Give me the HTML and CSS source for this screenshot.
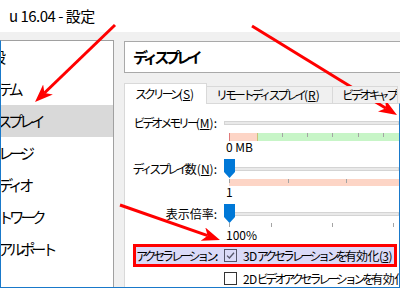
FILE: index.html
```html
<!DOCTYPE html>
<html lang="ja">
<head>
<meta charset="utf-8">
<title>設定</title>
<link rel="stylesheet" href="styles.css">
</head>
<body>
<div class="titlebar">u 16.04 - 設定</div>
<div class="main">
  <ul class="sidebar">
    <li class="item">一般</li>
    <li class="item"><span class="k">システム</span></li>
    <li class="item sel"><span class="k">ディスプレイ</span></li>
    <li class="item"><span class="k">ストレージ</span></li>
    <li class="item"><span class="k">オーディオ</span></li>
    <li class="item"><span class="k">ネットワーク</span></li>
    <li class="item"><span class="k">シリアルポート</span></li>
  </ul>
  <div class="content">
    <div class="header"><span class="k">ディスプレイ</span></div>
    <div class="tabs">
      <div class="tab sel"><span class="k">スクリーン</span>(<u>S</u>)</div>
      <div class="tab t2"><span class="k">リモートディスプレイ</span>(<u>R</u>)</div>
      <div class="tab t3"><span class="k">ビデオキャプチャー</span>(<u>C</u>)</div>
    </div>
    <div class="panel">
      <div class="block">
        <div class="lbl"><span class="k">ビデオメモリー</span>(<u>M</u>):</div>
        <div class="ctl">
          <div class="slider"><div class="track"></div></div>
          <div class="scale mem"></div>
          <div class="val">0 MB</div>
        </div>
      </div>
      <div class="block b2">
        <div class="lbl"><span class="k">ディスプレイ</span>数(<u>N</u>):</div>
        <div class="ctl">
          <div class="slider"><div class="track"></div><svg class="thumb" width="11" height="19" viewBox="0 0 11 19"><polygon points="0,0 11,0 11,13 5.5,19 0,13" fill="#0078d7"/></svg></div>
          <div class="scale mon"></div>
          <div class="val">1</div>
        </div>
      </div>
      <div class="block b3">
        <div class="lbl">表示倍率:</div>
        <div class="ctl">
          <div class="slider"><div class="track"></div><svg class="thumb" width="11" height="19" viewBox="0 0 11 19"><polygon points="0,0 11,0 11,13 5.5,19 0,13" fill="#0078d7"/></svg></div>
          <div class="ticks"></div>
          <div class="val v3">100%</div>
        </div>
      </div>
      <div class="accel">
        <div class="alabel"><span class="k">アクセラレーション</span>:</div>
        <div class="check">
          <svg class="box" width="13" height="13" viewBox="0 0 13 13"><rect x="0.5" y="0.5" width="12" height="12" fill="none" stroke="#55556a"/><path d="M3 6.6 L5.4 9 L10 3.8" fill="none" stroke="#55556a" stroke-width="1.3"/></svg>
          <span class="ctext">3D<span class="k">アクセラレーションを</span>有効化(<u>3</u>)</span>
        </div>
      </div>
      <div class="row5">
        <div class="check">
          <svg class="box" width="13" height="13" viewBox="0 0 13 13"><rect x="0.5" y="0.5" width="12" height="12" fill="#fff" stroke="#333"/></svg>
          <span class="ctext">2D<span class="k">ビデオアクセラレーションを</span>有効化(<u>2</u>)</span>
        </div>
      </div>
    </div>
  </div>
</div>
<svg class="arrows" width="400" height="288" viewBox="0 0 400 288">
  <defs>
    <marker id="ah" markerUnits="userSpaceOnUse" markerWidth="20" markerHeight="16" viewBox="0 0 20 16" refX="5" refY="7" orient="auto">
      <path d="M0,0 L18,7 L0,14 L5,7 Z" fill="#f00"/>
    </marker>
  </defs>
  <line x1="115" y1="25" x2="44.4" y2="93" stroke="#f00" stroke-width="3" marker-end="url(#ah)"/>
  <line x1="252" y1="26" x2="385.9" y2="108.2" stroke="#f00" stroke-width="3" marker-end="url(#ah)"/>
  <line x1="120" y1="205" x2="207.7" y2="235.7" stroke="#f00" stroke-width="3" marker-end="url(#ah)"/>
</svg>
</body>
</html>
```

FILE: styles.css
```css
html, body {
  margin: 0;
  width: 400px;
  height: 288px;
  overflow: hidden;
}
body {
  position: relative;
  background: #f0f0f0;
  font-family: "Noto Sans CJK JP", sans-serif;
  font-size: 12px;
  color: #000;
}
.k { letter-spacing: -0.26em; }
u { text-decoration: underline; }

.titlebar {
  height: 32px;
  background: #fff;
  padding-left: 9px;
  font-size: 15px;
  line-height: 32px;
  letter-spacing: -0.5px;
  white-space: nowrap;
}

.main {
  display: flex;
  width: 400px;
  height: 256px;
  box-sizing: border-box;
  border-bottom: 1px solid #1979ca;
}

.sidebar {
  list-style: none;
  margin: 8px 0 0 0;
  padding: 0;
  width: 112px;
  background: #fff;
  border-top: 1px solid #a0a0a0;
  border-right: 1px solid #a0a0a0;
  border-left: 1px solid #1979ca;
  overflow: hidden;
}
.item {
  height: 32px;
  line-height: 32px;
  font-size: 15px;
  white-space: nowrap;
  text-indent: -25px;
}
.item.sel { background: #d9d9d9; }

.content {
  flex: 1;
  min-width: 0;
  padding: 9px 0 0 10px;
  display: flex;
  flex-direction: column;
}

.header {
  height: 30px;
  border: 1px solid #a9a9a9;
  border-right: none;
  background: #fff;
  font-size: 15px;
  font-weight: bold;
  line-height: 30px;
  padding-left: 8px;
  white-space: nowrap;
}

.tabs {
  display: flex;
  align-items: flex-end;
  margin-top: 10px;
  height: 20px;
  position: relative;
  z-index: 1;
}
.tab {
  box-sizing: border-box;
  height: 16px;
  border: 1px solid #d9d9d9;
  border-bottom: none;
  border-left: none;
  background: #f0f0f0;
  line-height: 14px;
  padding-left: 9px;
  white-space: nowrap;
  overflow: hidden;
}
.tab.sel {
  flex: none;
  width: 83px;
  height: 21px;
  margin-bottom: -1px;
  border-left: 1px solid #d9d9d9;
  background: #fff;
  line-height: 19px;
  padding-left: 10px;
}
.tab.t2 { flex: none; width: 126px; height: 17px; line-height: 15px; }
.tab.t3 { flex: 1; min-width: 0; height: 17px; line-height: 15px; margin-right: 2px; }

.panel {
  flex: 1;
  background: #fff;
  border: 1px solid #d9d9d9;
  border-right: 1px solid #1979ca;
  border-bottom: none;
  padding-top: 9px;
  overflow: hidden;
}

.block {
  display: grid;
  grid-template-columns: 92px 1fr;
  column-gap: 7px;
}
.b2, .b3 { margin-top: 6px; }
.lbl {
  text-align: right;
  height: 19px;
  line-height: 19px;
  white-space: nowrap;
}
.ctl { display: flex; flex-direction: column; }
.slider {
  position: relative;
  height: 19px;
  display: flex;
  align-items: center;
}
.track {
  flex: 1;
  height: 2px;
  background: #e9e9e9;
  border: 1px solid #d4d4d4;
}
.thumb { position: absolute; left: 0; top: 0; }

.scale { margin: 1px 0 0 5px; }
.scale.mem {
  height: 8px;
  background:
    linear-gradient(#e07a7a, #e07a7a) 0 0 / 1px 100% no-repeat,
    linear-gradient(#c9c27a, #c9c27a) 28px 0 / 1px 100% no-repeat,
    repeating-linear-gradient(90deg, #a4a4a4 0 1px, transparent 1px 25.2px) 53px 0 / 200px 4px no-repeat,
    linear-gradient(90deg, #fdd5c6 0 29px, #c7f5c7 29px);
}
.scale.mon {
  height: 7px;
  background:
    repeating-linear-gradient(90deg, #a4a4a4 0 1px, transparent 1px 58.7px) 0 0 / 200px 4px no-repeat,
    #fdd5c6;
}
.ticks {
  height: 4px;
  margin-left: 5px;
  background:
    linear-gradient(#a4a4a4, #a4a4a4) 0 0 / 1px 100% no-repeat,
    repeating-linear-gradient(90deg, #a4a4a4 0 1px, transparent 1px 61px) 42px 0 / 200px 100% no-repeat;
}
.val {
  margin-left: 2px;
  height: 12px;
  line-height: 12px;
  white-space: nowrap;
}
.v3 { margin-top: 2px; }

.accel {
  margin: 3px 0 0 8px;
  width: 258px;
  height: 17px;
  border: 3px solid #f00;
  background: #dadaf8;
  display: grid;
  grid-template-columns: 81px 1fr;
  column-gap: 7px;
  align-items: center;
}
.alabel {
  text-align: right;
  white-space: nowrap;
  line-height: 17px;
}
.check {
  display: flex;
  align-items: center;
  gap: 6px;
  white-space: nowrap;
  line-height: 17px;
}
.ctext { letter-spacing: -0.6px; }
.ctext .k { letter-spacing: -0.26em; }
.box { flex: none; display: block; }

.row5 {
  height: 22px;
  padding-left: 99px;
  display: flex;
  align-items: center;
}

.arrows {
  position: absolute;
  left: 0;
  top: 0;
  pointer-events: none;
}
```
